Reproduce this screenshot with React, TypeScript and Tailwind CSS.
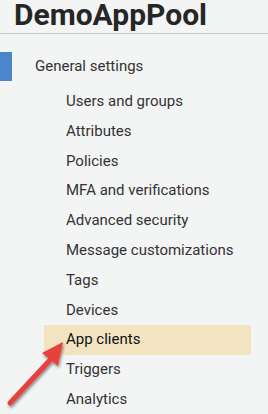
import React from 'react';

const items = [
  'Users and groups',
  'Attributes',
  'Policies',
  'MFA and verifications',
  'Advanced security',
  'Message customizations',
  'Tags',
  'Devices',
  'App clients',
  'Triggers',
  'Analytics',
];

const Arrow: React.FC = () => (
  <svg className="absolute left-0 top-[336px]" width="72" height="78" viewBox="0 336 72 78">
    <defs>
      <filter id="sh" x="-30%" y="-30%" width="160%" height="160%">
        <feDropShadow dx="1" dy="2" stdDeviation="1.5" floodColor="#000" floodOpacity="0.45" />
      </filter>
    </defs>
    <g filter="url(#sh)">
      <line x1="10" y1="403" x2="50" y2="360" stroke="#e8403d" strokeWidth="5" strokeLinecap="round" />
      <polygon points="63,342 42,353 58,366" fill="#e8403d" />
    </g>
  </svg>
);

export default function App() {
  return (
    <div className="relative w-[268px] h-[414px] overflow-hidden bg-[#f3f4f4] font-['Roboto','Liberation_Sans',sans-serif]">
      <div className="h-[34px] border-b border-[#c9caca] pl-[14px]">
        <h1 className="text-[30px] font-bold leading-[30px] text-[#262626]">DemoAppPool</h1>
      </div>
      <div className="mt-[17px] flex h-[30px] items-center">
        <div className="w-[12px] h-[29px] bg-[#4a86c9]" />
        <span className="ml-[23px] text-[15px] leading-[30px] text-[#333]">General settings</span>
      </div>
      <ul className="mt-[6px] pl-[44px] pr-[17px]">
        {items.map((it) => (
          <li
            key={it}
            className={
              it === 'App clients'
                ? 'h-[29.8px] leading-[29.8px] pl-[22px] text-[15px] bg-[#f2e4c1] text-[#111]'
                : 'h-[29.8px] leading-[29.8px] pl-[22px] text-[15px] text-[#333]'
            }
          >
            {it}
          </li>
        ))}
      </ul>
      <Arrow />
    </div>
  );
}
